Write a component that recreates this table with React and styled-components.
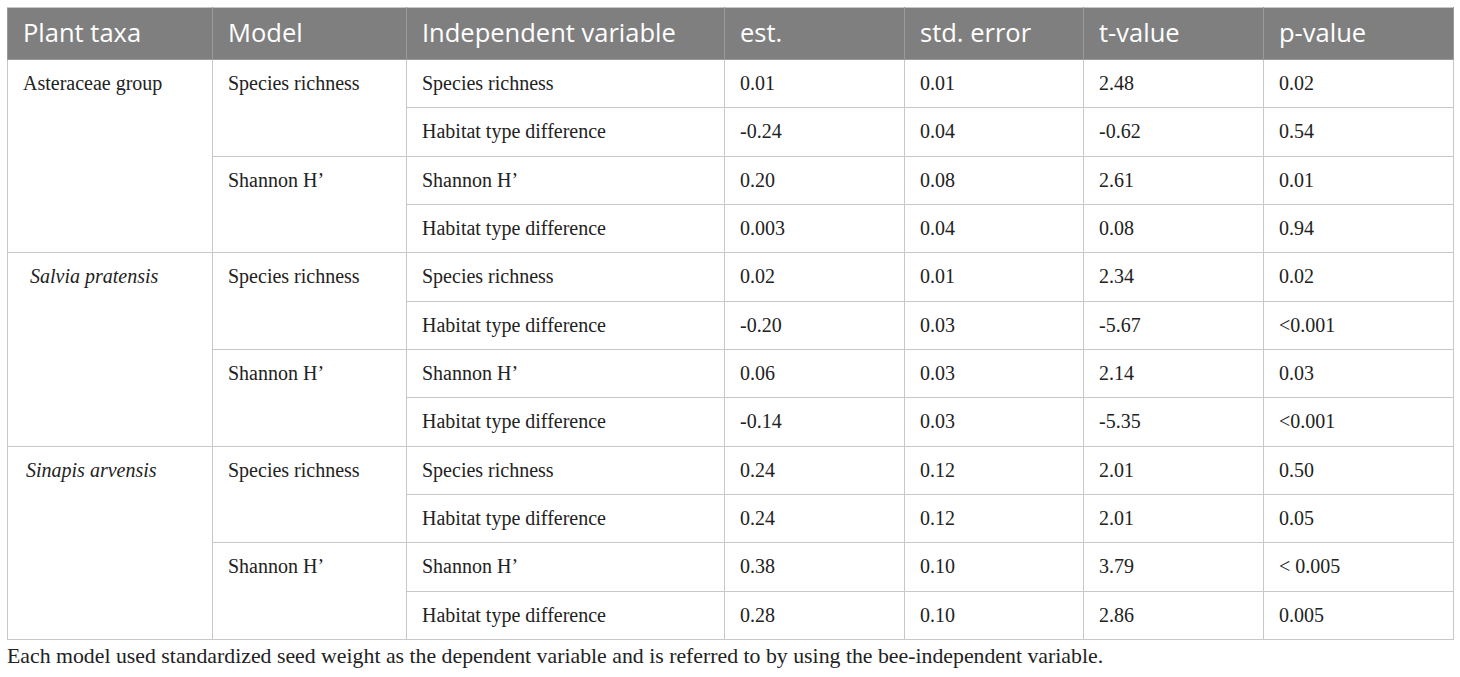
import React from "react";
import styled, { createGlobalStyle } from "styled-components";

const GlobalStyle = createGlobalStyle`
  html, body { margin: 0; padding: 0; background: #fff; }
  body { font-family: "Liberation Serif", serif; color: #222; }
`;

const columns = [
  { label: "Plant taxa", width: 205 },
  { label: "Model", width: 194 },
  { label: "Independent variable", width: 318 },
  { label: "est.", width: 180 },
  { label: "std. error", width: 179 },
  { label: "t-value", width: 180 },
  { label: "p-value", width: 190 },
];

const groups = [
  {
    taxa: "Asteraceae group",
    italic: false,
    models: [
      {
        name: "Species richness",
        rows: [
          ["Species richness", "0.01", "0.01", "2.48", "0.02"],
          ["Habitat type difference", "-0.24", "0.04", "-0.62", "0.54"],
        ],
      },
      {
        name: "Shannon H’",
        rows: [
          ["Shannon H’", "0.20", "0.08", "2.61", "0.01"],
          ["Habitat type difference", "0.003", "0.04", "0.08", "0.94"],
        ],
      },
    ],
  },
  {
    taxa: "Salvia pratensis",
    italic: true,
    indent: 7,
    models: [
      {
        name: "Species richness",
        rows: [
          ["Species richness", "0.02", "0.01", "2.34", "0.02"],
          ["Habitat type difference", "-0.20", "0.03", "-5.67", "<0.001"],
        ],
      },
      {
        name: "Shannon H’",
        rows: [
          ["Shannon H’", "0.06", "0.03", "2.14", "0.03"],
          ["Habitat type difference", "-0.14", "0.03", "-5.35", "<0.001"],
        ],
      },
    ],
  },
  {
    taxa: "Sinapis arvensis",
    italic: true,
    indent: 3,
    models: [
      {
        name: "Species richness",
        rows: [
          ["Species richness", "0.24", "0.12", "2.01", "0.50"],
          ["Habitat type difference", "0.24", "0.12", "2.01", "0.05"],
        ],
      },
      {
        name: "Shannon H’",
        rows: [
          ["Shannon H’", "0.38", "0.10", "3.79", "< 0.005"],
          ["Habitat type difference", "0.28", "0.10", "2.86", "0.005"],
        ],
      },
    ],
  },
];

const ROW_PITCH = 580 / 12;

const Wrap = styled.div`
  padding: 7px 7px 0 7px;
`;

const Table = styled.table`
  border-collapse: collapse;
  table-layout: fixed;
  width: 1446px;
`;

const HeadCell = styled.th`
  background: #7f7f7f;
  color: #fff;
  font-family: "Open Sans", "Noto Sans", sans-serif;
  font-weight: 400;
  font-size: 25.5px;
  line-height: 30px;
  text-align: left;
  height: 52px;
  padding: 0 0 3px 15px;
  border: 1px solid #9a9a9a;
  border-top-color: #c8c8c8;
  box-sizing: border-box;
  white-space: nowrap;
`;

const Row = styled.tr``;

const Cell = styled.td`
  border: 1px solid #c8c8c8;
  font-size: 20px;
  color: #222;
  padding: 0 0 0 15px;
  vertical-align: top;
  line-height: 47px;
  box-sizing: border-box;
  white-space: nowrap;
  font-style: ${(p) => (p.$italic ? "italic" : "normal")};
  padding-left: ${(p) => 15 + (p.$indent || 0)}px;
`;

const Note = styled.p`
  margin: 4px 0 0 0;
  font-size: 21.8px;
  line-height: 24px;
  color: #222;
  white-space: nowrap;
`;

export default function App() {
  const body = [];
  let idx = 0;
  groups.forEach((g, gi) => {
    const taxaSpan = g.models.reduce((n, m) => n + m.rows.length, 0);
    g.models.forEach((m, mi) => {
      m.rows.forEach((r, ri) => {
        const h = Math.round(ROW_PITCH * (idx + 1)) - Math.round(ROW_PITCH * idx);
        idx += 1;
        body.push(
          <Row key={`${gi}-${mi}-${ri}`} style={{ height: h }}>
            {mi === 0 && ri === 0 && (
              <Cell rowSpan={taxaSpan} $italic={g.italic} $indent={g.indent}>
                {g.taxa}
              </Cell>
            )}
            {ri === 0 && <Cell rowSpan={m.rows.length}>{m.name}</Cell>}
            {r.map((v, vi) => (
              <Cell key={vi}>{v}</Cell>
            ))}
          </Row>
        );
      });
    });
  });

  return (
    <>
      <GlobalStyle />
      <Wrap>
        <Table>
          <colgroup>
            {columns.map((c) => (
              <col key={c.label} style={{ width: c.width }} />
            ))}
          </colgroup>
          <thead>
            <tr>
              {columns.map((c) => (
                <HeadCell key={c.label}>{c.label}</HeadCell>
              ))}
            </tr>
          </thead>
          <tbody>{body}</tbody>
        </Table>
        <Note>
          Each model used standardized seed weight as the dependent variable and is referred to by using the bee-independent variable.
        </Note>
      </Wrap>
    </>
  );
}
